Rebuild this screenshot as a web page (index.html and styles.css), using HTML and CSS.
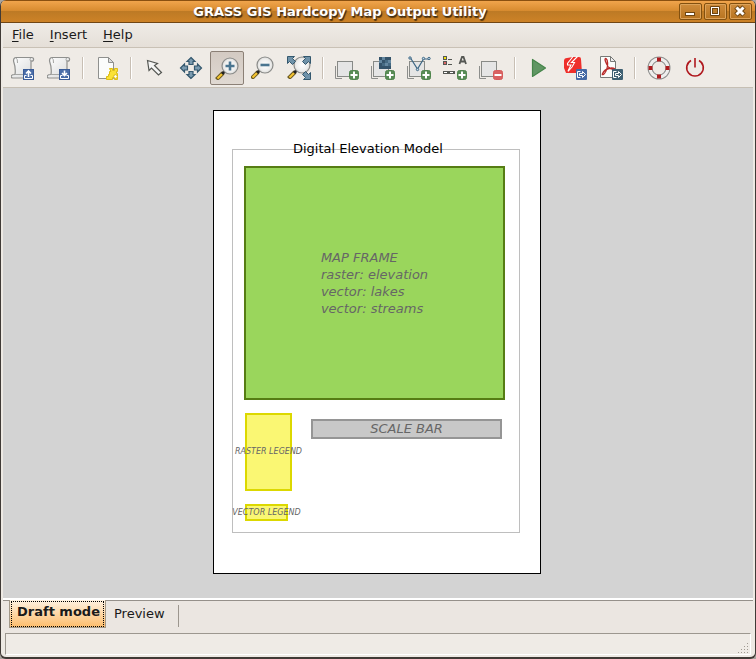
FILE: index.html
```html
<!DOCTYPE html>
<html lang="en">
<head>
<meta charset="utf-8">
<title>GRASS GIS Hardcopy Map Output Utility</title>
<link rel="stylesheet" href="styles.css">
</head>
<body>
<svg class="defs" width="0" height="0" aria-hidden="true">
  <defs>
    <linearGradient id="paper" x2="1" y2="1"><stop offset="0" stop-color="#fff"/><stop offset="1" stop-color="#d8d9d9"/></linearGradient>
    <radialGradient id="glass"><stop offset="0" stop-color="#fff"/><stop offset=".7" stop-color="#eeeeed"/><stop offset="1" stop-color="#dcdcda"/></radialGradient>
    <symbol id="scroll" viewBox="0 0 24 24">
      <path d="M4.500 1.500H20.500Q23 1.500 22.500 4Q22 5.500 20 5V18.500Q20 21.500 17 22H2Q-.5 22 .5 19.500Q1 18.500 4 18.500Q5 12 2.500 5Q2.500 2 4.500 1.500Z" fill="url(#paper)" stroke="#8f908e" stroke-width="1.200"/>
      <path d="M4.500 1.500Q7 3 6.500 7M19.500 2Q18.500 3 19.500 5H22M4 18.500H13" fill="none" stroke="#a5a6a4"/>
    </symbol>
    <symbol id="layers" viewBox="0 0 24 24">
      <path d="M.5 10V22.500H7" fill="none" stroke="#8d8e8c"/>
      <rect x="2.500" y="5.500" width="15" height="15" fill="#e5e5e5" stroke="#888a87"/>
    </symbol>
    <symbol id="plus" viewBox="0 0 24 24">
      <rect x="14.500" y="14.500" width="9" height="9" rx="2" fill="#588b55" stroke="#4f854c"/>
      <path d="M19 15.500V22.500M15.500 19H22.500" stroke="#fff" stroke-width="2"/>
    </symbol>
    <symbol id="lens" viewBox="0 0 24 24">
      <path d="M1.500 23.500L8 17" stroke="#6b5a22" stroke-width="4"/>
      <path d="M2.500 22.500L8 17" stroke="#f6c531" stroke-width="2"/>
      <path d="M7 18L10 15" stroke="#222" stroke-width="3"/>
      <circle cx="15" cy="10" r="8" fill="url(#glass)" stroke="#8b8c8a" stroke-width="1.200"/>
    </symbol>
    <symbol id="export" viewBox="0 0 24 24">
      <rect x="13" y="13" width="11" height="11" rx="1" fill="currentColor"/>
      <path d="M17.500 15.500H14.500V21.500H17.500" fill="none" stroke="#fff"/>
      <path d="M16.500 17.500H19.500V15.500L22.500 18.500L19.500 21.500V19.500H16.500Z" fill="currentColor" stroke="#fff"/>
    </symbol>
    <symbol id="tray" viewBox="0 0 24 24">
      <rect x="12.500" y="13.500" width="10" height="10" fill="#4a6da8" stroke="#3a5c97"/>
      <path d="M15.500 19.500H13.500V22.500H21.500V19.500H19.500" fill="none" stroke="#fff"/>
    </symbol>
  </defs>
</svg>
<div class="window">
  <header class="titlebar">
    <h1>GRASS GIS Hardcopy Map Output Utility</h1>
    <div class="controls">
      <button type="button" aria-label="Minimize"><svg viewBox="0 0 21 15"><rect x="5.500" y="8.500" width="9" height="3" fill="#fff" stroke="#6d4512"/></svg></button>
      <button type="button" aria-label="Maximize"><svg viewBox="0 0 21 15"><path d="M5.500 2.500H14.500V11.500H5.500Z" fill="#fff" stroke="#6d4512"/><rect x="7.500" y="4.500" width="5" height="5" fill="#bf7d29" stroke="#6d4512"/></svg></button>
      <button type="button" aria-label="Close"><svg viewBox="0 0 21 15"><path d="M6 3L14 11M14 3L6 11" stroke="#6d4512" stroke-width="5"/><path d="M6.500 3.500L13.500 10.500M13.500 3.500L6.500 10.500" stroke="#fff" stroke-width="3"/></svg></button>
    </div>
  </header>
  <nav class="menubar">
    <button type="button"><u>F</u>ile</button>
    <button type="button"><u>I</u>nsert</button>
    <button type="button"><u>H</u>elp</button>
  </nav>
  <div class="toolbar" role="toolbar">
    <button type="button" aria-label="Load file"><svg viewBox="0 0 24 24"><use href="#scroll"/><use href="#tray"/><path d="M17.500 21V15.500M15 17.500L17.500 15L20 17.500" fill="none" stroke="#fff" stroke-width="1.600"/></svg></button>
    <button type="button" aria-label="Save file"><svg viewBox="0 0 24 24"><use href="#scroll"/><use href="#tray"/><path d="M17.500 14.500V19.500M15 17L17.500 19.500L20 17" fill="none" stroke="#fff" stroke-width="1.600"/></svg></button>
    <span class="sep"></span>
    <button type="button" aria-label="Page setup"><svg viewBox="0 0 24 24"><path d="M3.500 1.500H13.500L18.500 6.500V22.500H3.500Z" fill="#fbfcfb" stroke="#8f908e"/><path d="M13.500 1.500V6.500H18.500Z" fill="#ddd" stroke="#8f908e"/><path d="M14.500 12.500H17.500V14.500H19.500V12.500H22.500V15.500H21.500V17.500H22.500V23.500H19.500V21.500H17.500V23.500H11.500V20.500H13.500V18.500H14.500V15.500H16Z" fill="#fbe234" stroke="#dcbd14"/><circle cx="20.500" cy="20.500" r="1.800" fill="#fff" stroke="#dcbd14"/></svg></button>
    <span class="sep"></span>
    <button type="button" aria-label="Pointer"><svg viewBox="0 0 24 24"><path d="M4.500 4.500L6 14.500L8.500 12L15.500 19L18.500 16.500L11.500 9.500L14.500 7.500Z" fill="#f5f5f4" stroke="#555753" stroke-width="1.200"/></svg></button>
    <button type="button" aria-label="Pan"><svg viewBox="0 0 24 24"><path d="M12 1.500L16 5.500H14V8.500H10V5.500H8ZM12 22.500L8 18.500H10V15.500H14V18.500H16ZM1.500 12L5.500 8V10H8.500V14H5.500V16ZM22.500 12L18.500 16V14H15.500V10H18.500V8Z" fill="#7b9bb0" stroke="#34586e" stroke-width="1.200"/></svg></button>
    <button type="button" class="active" aria-pressed="true" aria-label="Zoom in"><svg viewBox="0 0 24 24"><use href="#lens"/><path d="M15 5.500V14.500M10.500 10H19.500" stroke="#4a7590" stroke-width="2.600"/></svg></button>
    <button type="button" aria-label="Zoom out"><svg viewBox="0 0 24 24"><use href="#lens" x="-1" y="-1"/><path d="M9.500 9H18.500" stroke="#4a7590" stroke-width="2.600"/></svg></button>
    <button type="button" aria-label="Zoom to page"><svg viewBox="0 0 24 24"><use href="#lens" y="-1"/><g fill="#6f92a9" stroke="#34586e"><path d="M.5.5H7.500L5.500 2.500L8.500 5.500L5.500 8.500L2.500 5.500L.5 7.500Z"/><path d="M23.500.5H16.500L18.500 2.500L15.500 5.500L18.500 8.500L21.500 5.500L23.500 7.500Z"/><path d="M23.500 23.500H16.500L18.500 21.500L15.500 18.500L18.500 15.500L21.500 18.500L23.500 16.500Z"/></g></svg></button>
    <span class="sep"></span>
    <button type="button" aria-label="Add map frame"><svg viewBox="0 0 24 24"><use href="#layers"/><use href="#plus"/></svg></button>
    <button type="button" aria-label="Add raster"><svg viewBox="0 0 24 24"><use href="#layers"/><rect x="8" y="1" width="12" height="12" fill="#34536a"/><path d="M11 1h3v3h-3ZM17 4h3v3h-3ZM8 4h3v3h-3ZM14 7h3v3h-3Z" fill="#6487a0"/><path d="M14 4h3v3h-3ZM17 7h3v3h-3ZM11 7h3v3h-3Z" fill="#456a83"/><use href="#plus"/></svg></button>
    <button type="button" aria-label="Add vector"><svg viewBox="0 0 24 24"><use href="#layers"/><path d="M3.500 2L10.500 13L16.500 3H22" fill="none" stroke="#3d6785" stroke-width="1.200"/><g fill="#c7dae7" stroke="#3d6785"><circle cx="3" cy="2" r="1.200"/><circle cx="10.500" cy="13.500" r="1.200"/><circle cx="16.500" cy="2.500" r="1.200"/><circle cx="22" cy="2.500" r="1.200"/></g><use href="#plus"/></svg></button>
    <button type="button" aria-label="Add overlay"><svg viewBox="0 0 24 24"><g stroke="#555753"><rect x=".5" y=".5" width="3" height="3" fill="#f4e40d"/><rect x=".5" y="5.500" width="3" height="3" fill="#d66"/><path d="M5 3.500H9M5 8.500H9"/><rect x=".5" y="15.500" width="11" height="2" fill="#555753"/></g><path d="M1 16.500H4M7 16.500H10" stroke="#fff"/><path d="M16.500 8L19 1H20.500L23 8M17.500 5.500H22" fill="none" stroke="#555753" stroke-width="1.800"/><use href="#plus"/></svg></button>
    <button type="button" aria-label="Delete selected object"><svg viewBox="0 0 24 24"><use href="#layers"/><rect x="14.500" y="14.500" width="9" height="9" rx="2" fill="#d96262" stroke="#d65a5a"/><path d="M15.500 19H22.500" stroke="#fff" stroke-width="2"/></svg></button>
    <span class="sep"></span>
    <button type="button" aria-label="Show preview"><svg viewBox="0 0 24 24"><path d="M5.500 3.500V20.500L18.500 12Z" fill="#609663" stroke="#45854a" stroke-linejoin="round" stroke-width="1.200"/></svg></button>
    <button type="button" aria-label="Generate PostScript"><svg viewBox="0 0 24 24"><path d="M1 5Q1 2 4 2L10 1H16Q18 1 18 3L19 17H3L1 12Z" fill="#ee2f2b"/><path d="M10 .5L4.500 7.500V9H8L5 15M14.500 .5L8.500 6.500H11.500L9 11L5 15.500" fill="none" stroke="#fff" stroke-width="1.100"/><use href="#export" color="#4569a5"/></svg></button>
    <button type="button" aria-label="Generate PDF"><svg viewBox="0 0 24 24"><path d="M1.500.5H11.500L16.500 5.500V21.500H1.500Z" fill="#fbfcfb" stroke="#777977"/><path d="M11.500.5V5.500H16.500Z" fill="#eee" stroke="#777977"/><path d="M6.500 2.500C5 3 7.500 8 9 10.500Q11 13.500 15 13.500Q17 12.500 12.500 12Q7 12.500 4.500 16Q2 19.500 4.500 18.500Q7.500 16 8.500 10Q9 3 6.500 2.500Z" fill="none" stroke="#b92b2b" stroke-width="1.300"/><use href="#export" color="#3f6072"/></svg></button>
    <span class="sep"></span>
    <button type="button" aria-label="Help"><svg viewBox="0 0 24 24"><circle cx="12" cy="12" r="9" fill="none" stroke="#8f908f" stroke-width="5"/><circle cx="12" cy="12" r="9" fill="none" stroke="#eeeeed" stroke-width="3"/><path d="M10 1.500H14V5.500H10ZM10 18.500H14V22.500H10ZM1.500 10H5.500V14H1.500ZM18.500 10H22.500V14H18.500Z" fill="#ad1c20"/></svg></button>
    <button type="button" aria-label="Quit"><svg viewBox="0 0 24 24"><path d="M8 4.500A8.300 8.300 0 1 0 16 4.500M12 2V11.500" fill="none" stroke="#b0181e" stroke-width="1.600"/></svg></button>
  </div>
  <main class="canvas">
    <section class="page">
      <div class="margins"></div>
      <div class="item map"><p>MAP FRAME<br>raster: elevation<br>vector: lakes<br>vector: streams</p></div>
      <div class="item caption">Digital Elevation Model</div>
      <div class="item legend raster"><span>RASTER LEGEND</span></div>
      <div class="item legend vector"><span>VECTOR LEGEND</span></div>
      <div class="item scale">SCALE BAR</div>
    </section>
  </main>
  <div class="tabs" role="tablist">
    <button type="button" role="tab" aria-selected="true"><span>Draft mode</span></button>
    <button type="button" role="tab" aria-selected="false">Preview</button>
  </div>
  <footer class="status"><svg viewBox="0 0 12 12"><path d="M9 1h1v1h-1ZM6 4h1v1h-1ZM9 4h1v1h-1ZM3 7h1v1h-1ZM6 7h1v1h-1ZM9 7h1v1h-1ZM0 10h1v1h-1ZM3 10h1v1h-1ZM6 10h1v1h-1ZM9 10h1v1h-1Z" fill="#a09a92"/></svg></footer>
</div>
</body>
</html>
```
FILE: styles.css
```css
* { box-sizing: border-box; }
body {
  margin: 0;
  background: #a9a49e;
  color: #1a1a1a;
  font: 13px/18px "DejaVu Sans", sans-serif;
}
button {
  margin: 0;
  padding: 0;
  border: 0;
  background: none;
  color: inherit;
  font: inherit;
}
svg { display: block; }
.defs { position: absolute; }
.window {
  display: flex;
  flex-direction: column;
  min-height: 100vh;
  border: 1px solid #403a36;
  border-width: 0 1px 2px;
  border-radius: 6px;
  background: #ede9e3;
  overflow: hidden;
}
.titlebar {
  display: flex;
  align-items: center;
  height: 23px;
  padding: 0 3px 0 0;
  border-top: 1px solid #8a5010;
  border-bottom: 1px solid #704614;
  background: linear-gradient(#f0a44c, #d98c30 45%, #bd7a25 50%, #cd8227);
}
.titlebar h1 {
  flex: 1;
  margin: 0;
  color: #fff;
  font: bold 13px/20px "DejaVu Sans", sans-serif;
  text-align: center;
  text-shadow: 1px 1px 1px #3c3020, 1px 2px 1px #5e3808;
}
.controls { display: flex; gap: 2px; }
.controls button {
  width: 23px;
  height: 17px;
  border: 1px solid #82500f;
  border-radius: 2px;
  background: linear-gradient(#cf8c3b, #b87420);
  box-shadow: inset 0 0 0 1px #dda35a;
}
.menubar {
  display: flex;
  gap: 16px;
  height: 25px;
  margin: 0 2px;
  padding: 0 9px;
  border-bottom: 1px solid #c9c1b5;
  background: linear-gradient(#efebe6, #e5dfd8);
}
.menubar u { text-underline-offset: 2px; }
.toolbar {
  display: flex;
  align-items: center;
  height: 40px;
  margin: 0 2px;
  padding: 0 2px;
  border-bottom: 1px solid #c6bfb4;
  background: #efebe6;
}
.toolbar button {
  width: 34px;
  height: 34px;
  margin: 0 1px;
  padding: 4px;
  border: 1px solid transparent;
  border-radius: 2px;
}
.toolbar button svg { width: 24px; height: 24px; }
.toolbar .active {
  border-color: #8b8076;
  background: linear-gradient(#d3cac2, #e0d9d2);
}
.sep {
  width: 2px;
  height: 22px;
  margin: 0 5px;
  border-left: 1px solid #c8bfb4;
  border-right: 1px solid #fff;
}
.canvas {
  flex: 1;
  display: flex;
  align-items: center;
  justify-content: center;
  margin: 0 2px;
  padding: 0 2px 2px 0;
  background: #d3d3d3;
}
.page {
  position: relative;
  width: 328px;
  height: 464px;
  border: 1px solid #000;
  background: #fff;
  color: #666;
  font-style: italic;
}
.margins {
  position: absolute;
  left: 18px;
  top: 38px;
  width: 288px;
  height: 384px;
  border: 1px solid #bebebe;
}
.item {
  position: absolute;
  display: flex;
  align-items: center;
  justify-content: center;
  white-space: nowrap;
}
.map {
  left: 30px;
  top: 55px;
  width: 261px;
  height: 234px;
  border: 2px solid #567d14;
  background: #9ad65c;
}
.map p { margin: 0; line-height: 17px; }
.caption {
  left: 79px;
  top: 29px;
  color: #000;
  font-style: normal;
}
.legend {
  left: 31px;
  border: 2px solid #dcd800;
  background: #faf773;
  font-size: 8px;
  line-height: 12px;
}
.raster { top: 302px; width: 47px; height: 78px; }
.vector { top: 393px; width: 43px; height: 17px; }
.scale {
  left: 97px;
  top: 308px;
  width: 191px;
  height: 20px;
  border: 2px solid #959595;
  background: #c8c8c8;
}
.tabs {
  display: flex;
  align-items: flex-start;
  height: 35px;
  margin: 0 2px;
  padding: 0 6px;
  border-top: 2px solid #fff;
  background: linear-gradient(#95908a 1px, #ebe6e1 1px);
}
.tabs button {
  height: 22px;
  margin-top: 5px;
  padding: 0 13px 8px 8px;
  border-right: 1px solid #9c968e;
}
.tabs button[aria-selected="true"] {
  height: 28px;
  margin: 0;
  padding: 1px;
  border: 1px solid #a29888;
  border-top: 0;
  background: linear-gradient(#fff2e2, #fdbd6c);
  font-weight: bold;
}
.tabs button span {
  display: block;
  padding: 1px 3px 5px 5px;
  border: 1px dotted #000;
}
.status {
  display: flex;
  align-items: flex-end;
  justify-content: flex-end;
  height: 22px;
  margin: 0 4px 2px;
  border: 1px solid #9c978f;
  border-right-color: #fff;
  border-bottom-color: #fff;
  background: #efebe6;
}
.status svg { width: 12px; height: 12px; }
```
